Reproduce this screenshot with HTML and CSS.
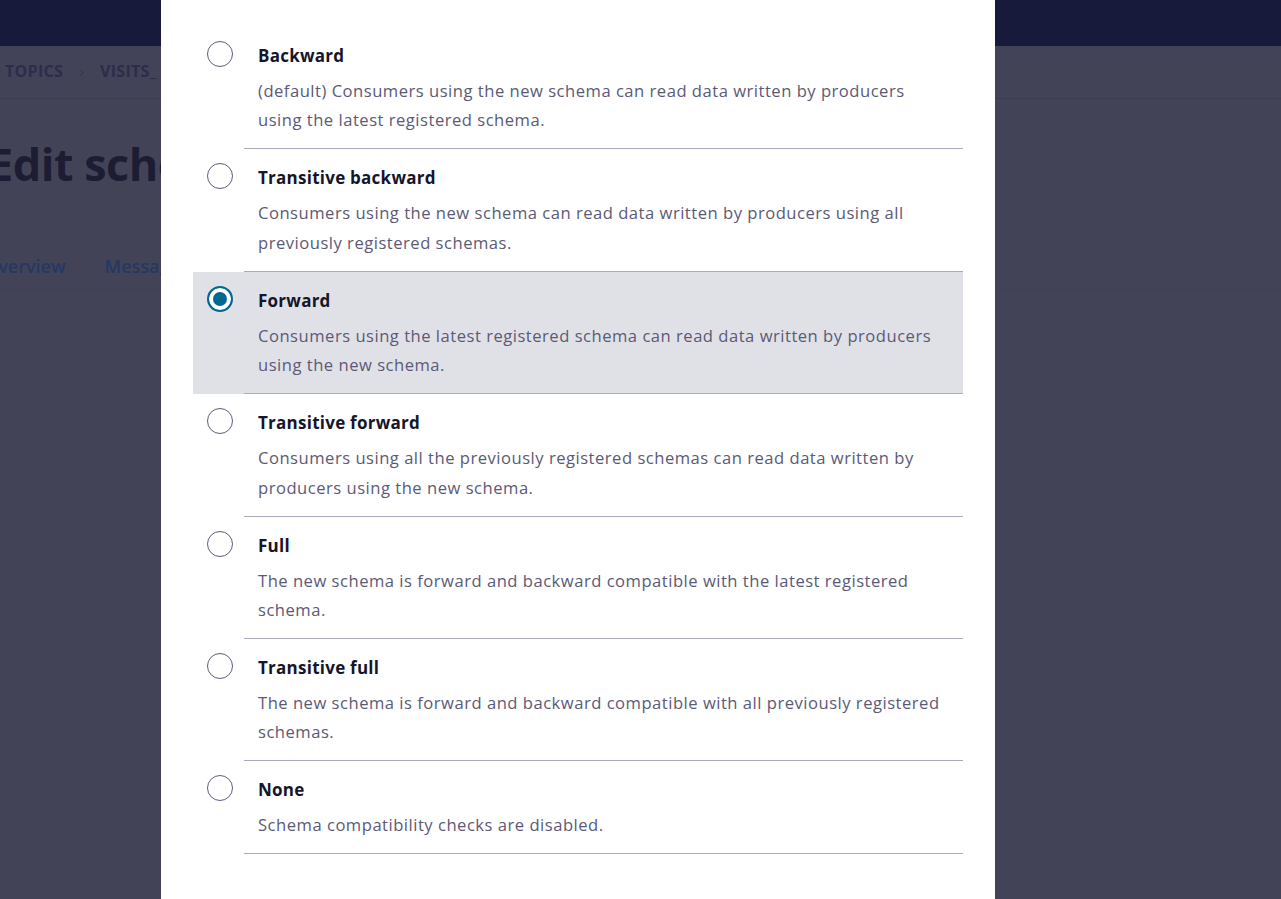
FILE: index.html
```html
<!DOCTYPE html>
<html lang="en">
<head>
<meta charset="utf-8">
<title>Edit schema - compatibility</title>
<link rel="stylesheet" href="styles.css">
</head>
<body>
<div class="page">
  <header class="topbar"></header>
  <nav class="crumbs">
    <span class="crumb">Topics</span>
    <span class="crumb-sep">›</span>
    <span class="crumb">Visits_</span>
  </nav>
  <h1 class="page-title">Edit schema</h1>
  <div class="tabs">
    <span class="tab">Overview</span>
    <span class="tab">Messages</span>
  </div>
</div>

<div class="modal" role="dialog">
  <ul class="options">
    <li class="option">
      <span class="radio"></span>
      <div class="option-body">
        <div class="option-title">Backward</div>
        <p class="option-desc">(default) Consumers using the new schema can read data written by producers using the latest registered schema.</p>
      </div>
    </li>
    <li class="option">
      <span class="radio"></span>
      <div class="option-body">
        <div class="option-title">Transitive backward</div>
        <p class="option-desc">Consumers using the new schema can read data written by producers using all previously registered schemas.</p>
      </div>
    </li>
    <li class="option is-selected">
      <span class="radio"></span>
      <div class="option-body">
        <div class="option-title">Forward</div>
        <p class="option-desc">Consumers using the latest registered schema can read data written by producers using the new schema.</p>
      </div>
    </li>
    <li class="option">
      <span class="radio"></span>
      <div class="option-body">
        <div class="option-title">Transitive forward</div>
        <p class="option-desc">Consumers using all the previously registered schemas can read data written by producers using the new schema.</p>
      </div>
    </li>
    <li class="option">
      <span class="radio"></span>
      <div class="option-body">
        <div class="option-title">Full</div>
        <p class="option-desc">The new schema is forward and backward compatible with the latest registered schema.</p>
      </div>
    </li>
    <li class="option">
      <span class="radio"></span>
      <div class="option-body">
        <div class="option-title">Transitive full</div>
        <p class="option-desc">The new schema is forward and backward compatible with all previously registered schemas.</p>
      </div>
    </li>
    <li class="option">
      <span class="radio"></span>
      <div class="option-body">
        <div class="option-title">None</div>
        <p class="option-desc">Schema compatibility checks are disabled.</p>
      </div>
    </li>
  </ul>
</div>
</body>
</html>
```

FILE: styles.css
```css
* { box-sizing: border-box; }

html, body {
  margin: 0;
  padding: 0;
  height: 100%;
  overflow: hidden;
}

body {
  background: #434358;
  font-family: "Open Sans", "Noto Sans", sans-serif;
}

.page {
  display: flex;
  flex-direction: column;
}

.topbar {
  height: 46px;
  background: #171a3b;
}

.crumbs {
  height: 53px;
  display: flex;
  align-items: center;
  gap: 16px;
  padding-left: 5px;
  padding-bottom: 2px;
  border-bottom: 1px solid #3c3c51;
}

.crumb {
  text-transform: uppercase;
  font-weight: 700;
  font-size: 16px;
  letter-spacing: 0.3px;
  color: #2c2d4a;
}

.crumb-sep {
  color: #34354f;
  font-size: 16px;
}

.page-title {
  margin: 38px 0 0 -12px;
  font-size: 45px;
  font-weight: 700;
  line-height: 54px;
  color: #1c1c33;
  letter-spacing: -0.5px;
}

.tabs {
  margin-top: 62px;
  margin-left: -16px;
  display: flex;
  gap: 39px;
  height: 37px;
  border-bottom: 1px solid #3f3f55;
}

.tab {
  font-size: 18px;
  font-weight: 600;
  color: #243863;
  line-height: 26px;
}

.modal {
  position: fixed;
  top: 0;
  bottom: 0;
  left: 161px;
  width: 834px;
  background: #ffffff;
  padding: 27px 32px 0 32px;
}

.options {
  list-style: none;
  margin: 0;
  padding: 0;
}

.option {
  display: flex;
  padding-left: 14px;
}

.option.is-selected {
  background: #e0e1e6;
}

.radio {
  flex: 0 0 26px;
  width: 26px;
  height: 26px;
  margin-top: 14px;
  border-radius: 50%;
  border: 1.5px solid #605c7c;
  background: #ffffff;
}

.is-selected .radio {
  border: 2px solid #00698f;
  background: #00698f;
  box-shadow: inset 0 0 0 4px #ffffff;
}

.option-body {
  flex: 1;
  margin-left: 11px;
  padding: 15px 14px 13.6px 14px;
  border-bottom: 1px solid #aba9ba;
}

.option-title {
  font-size: 17px;
  font-weight: 700;
  letter-spacing: 0.25px;
  line-height: 28px;
  color: #15152b;
}

.option-desc {
  margin: 6px 0 0 0;
  font-size: 16.6px;
  letter-spacing: 0.5px;
  line-height: 29.4px;
  color: #5b5a76;
}
```
